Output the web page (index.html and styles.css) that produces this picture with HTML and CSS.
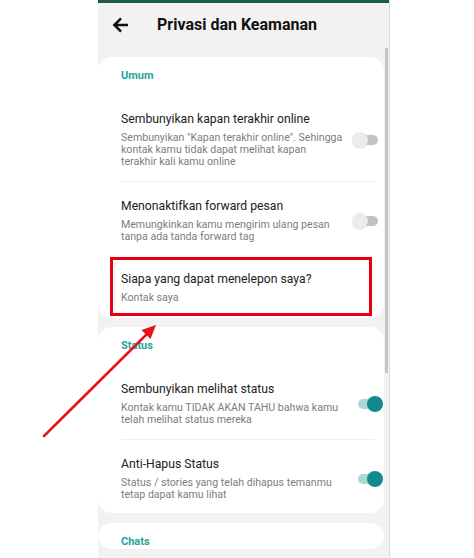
FILE: index.html
```html
<!DOCTYPE html>
<html lang="id">
<head>
<meta charset="utf-8">
<title>Privasi dan Keamanan</title>
<link rel="stylesheet" href="styles.css">
</head>
<body>
<div class="stage">
  <div class="phone">
    <div class="statusline"></div>
    <header class="appbar">
      <svg class="back" width="16" height="16" viewBox="0 0 16 16" aria-hidden="true">
        <path d="M15 8H2.5M8.2 2.2L2.4 8l5.8 5.8" fill="none" stroke="#111" stroke-width="2.5" stroke-linecap="square"/>
      </svg>
      <h1 class="title">Privasi dan Keamanan</h1>
    </header>
    <div class="scroller">
      <div class="list">
        <section class="card card-first">
          <div class="label">Umum</div>
          <div class="item">
            <div class="text">
              <div class="item-title">Sembunyikan kapan terakhir online</div>
              <div class="item-desc">Sembunyikan "Kapan terakhir online". Sehingga<br>kontak kamu tidak dapat melihat kapan<br>terakhir kali kamu online</div>
            </div>
            <div class="toggle off"><span class="track"></span><span class="thumb"></span></div>
          </div>
          <div class="divider"></div>
          <div class="item item-last-before-box">
            <div class="text">
              <div class="item-title">Menonaktifkan forward pesan</div>
              <div class="item-desc">Memungkinkan kamu mengirim ulang pesan<br>tanpa ada tanda forward tag</div>
            </div>
            <div class="toggle off"><span class="track"></span><span class="thumb"></span></div>
          </div>
          <div class="item-boxed">
            <div class="item-title">Siapa yang dapat menelepon saya?</div>
            <div class="item-desc">Kontak saya</div>
          </div>
        </section>
        <section class="card">
          <div class="label">Status</div>
          <div class="item">
            <div class="text">
              <div class="item-title">Sembunyikan melihat status</div>
              <div class="item-desc">Kontak kamu TIDAK AKAN TAHU bahwa kamu<br>telah melihat status mereka</div>
            </div>
            <div class="toggle on"><span class="track"></span><span class="thumb"></span></div>
          </div>
          <div class="divider"></div>
          <div class="item item-end">
            <div class="text">
              <div class="item-title">Anti-Hapus Status</div>
              <div class="item-desc">Status / stories yang telah dihapus temanmu<br>tetap dapat kamu lihat</div>
            </div>
            <div class="toggle on"><span class="track"></span><span class="thumb"></span></div>
          </div>
        </section>
        <section class="card">
          <div class="label">Chats</div>
        </section>
      </div>
      <div class="scrolltrack"><div class="scrollthumb"></div></div>
    </div>
  </div>
  <svg class="pointer" width="474" height="558" viewBox="0 0 474 558" aria-hidden="true">
    <line x1="44" y1="436" x2="148" y2="333" stroke="#e3121b" stroke-width="2.5" stroke-linecap="round"/>
    <polygon points="156,325 150.5,339 141.5,330" fill="#e3121b"/>
  </svg>
</div>
</body>
</html>
```
FILE: styles.css
```css
* { box-sizing: border-box; }
html, body { margin: 0; padding: 0; background: #fff; }
body { font-family: Roboto, "Noto Sans", Arial, sans-serif; }

.stage {
  position: relative;
  width: 474px;
  height: 558px;
  overflow: hidden;
  display: flex;
  padding-left: 98px;
  background: #fff;
}

.phone {
  width: 292px;
  height: 558px;
  background: #f2f2f2;
  border-right: 1px solid #dcdcdc;
  overflow: hidden;
  display: flex;
  flex-direction: column;
}

.statusline { height: 3px; background: #1d5a4b; flex: none; }

.appbar {
  height: 45px;
  flex: none;
  display: flex;
  align-items: center;
  padding-left: 14px;
}
.back { flex: none; margin-top: -1px; }
.title {
  margin: 0 0 0 29px;
  font-size: 16px;
  font-weight: 700;
  color: #111;
  letter-spacing: 0;
  line-height: 20px;
  margin-top: -2px;
}

.scroller { display: flex; flex: 1; min-height: 0; }
.list { width: 286px; padding-top: 9px; flex: none; }
.scrolltrack { width: 5px; flex: none; padding-left: 1px; }
.scrollthumb { width: 3px; height: 325px; background: #c4c4c4; }

.card {
  background: #fff;
  border-radius: 14px;
  padding: 12px 0 0 23px;
  margin-bottom: 10px;
}
.card-first { padding-bottom: 2px; margin-bottom: 9px; }

.label {
  font-size: 11px;
  font-weight: 700;
  color: #27a29c;
  line-height: 14px;
  margin-bottom: 12px;
}

.item {
  display: flex;
  align-items: center;
  padding: 16px 1px 13px 0;
}
.item-last-before-box { padding-bottom: 14px; }
.item-end { padding-bottom: 12px; }
.text { flex: 1; min-width: 0; }

.item-title {
  font-size: 12.2px;
  line-height: 16px;
  color: #222;
}
.item-desc {
  margin-top: 5px;
  font-size: 10.6px;
  line-height: 12px;
  color: #7d7d7d;
  white-space: nowrap;
}

.divider { height: 1px; background: #ededed; margin-right: 9px; }

.item-boxed {
  margin: 0 12px 0 -11px;
  border: 3px solid #e3000f;
  padding: 11px 8px 9px;
}

.toggle {
  position: relative;
  width: 31px;
  height: 16px;
  flex: none;
}
.toggle .track {
  position: absolute;
  left: 4px;
  right: 5px;
  top: 3px;
  height: 10px;
  border-radius: 5px;
  background: #c2c2c2;
}
.toggle .thumb {
  position: absolute;
  top: 0;
  left: 0;
  width: 16px;
  height: 16px;
  border-radius: 50%;
  background: #ececec;
  box-shadow: 0 0.5px 1px rgba(0,0,0,0.12);
}
.toggle.on .track { background: #a9d8d5; left: 6px; right: 3px; }
.toggle.on .thumb { left: auto; right: 0; background: #12898b; box-shadow: none; }

.pointer { position: absolute; left: 0; top: 0; pointer-events: none; }
```
